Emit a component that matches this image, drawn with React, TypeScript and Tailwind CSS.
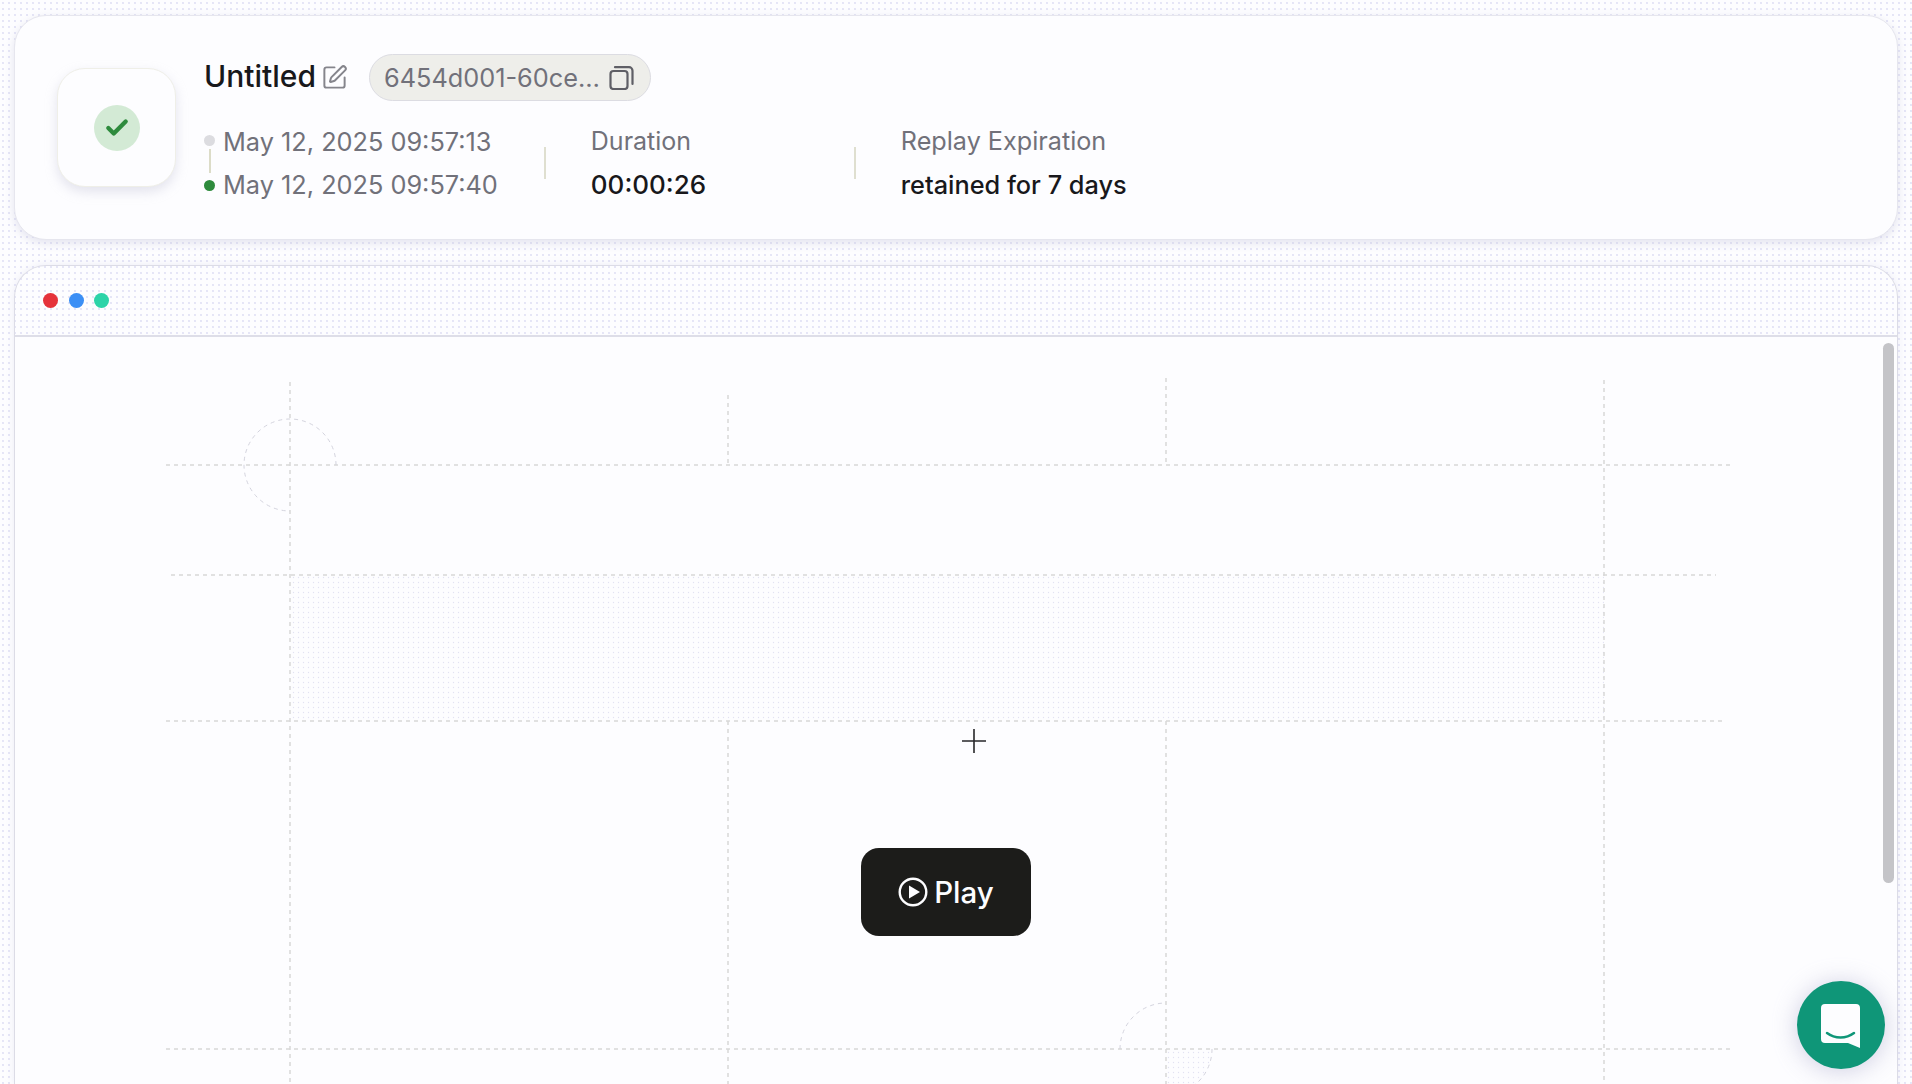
import { Check, SquarePen } from 'lucide-react'

const DOTS =
  'bg-[radial-gradient(#e4e4f6_0.7px,transparent_0.8px)] bg-[size:6px_6px]'

// dashed construction lines behind the play button, in page coordinates minus the panel offset
function GridLines() {
  const dash = { stroke: '#d8d8d8', strokeWidth: 1.5, strokeDasharray: '4 4', fill: 'none' }
  return (
    <svg className="absolute left-0 top-0 h-[760px] w-[1884px]" viewBox="14 337 1884 760">
      <defs>
        <pattern id="dots" width="5" height="5" patternUnits="userSpaceOnUse">
          <circle cx="2.5" cy="2.5" r="0.7" fill="#e2e2f2" />
        </pattern>
      </defs>
      <rect x="289" y="575" width="1314" height="146" fill="url(#dots)" />
      <path d="M165 465H1730M170 575H1715M165 721H1725M165 1049H1730" {...dash} />
      <path d="M289 382V1084M727 395V465M727 721V1084M1165 378V465M1165 721V1084M1603 380V1084" {...dash} />
      <path d="M335 465A46 46 0 1 0 289 511" {...dash} strokeWidth={1} stroke="#d4d4de" />
      <path d="M1119 1049A46 46 0 0 1 1165 1003" {...dash} strokeWidth={1} stroke="#d4d4de" />
      <path d="M1211 1049A46 46 0 0 1 1165 1095V1049Z" fill="url(#dots)" />
      <path d="M1211 1049A46 46 0 0 1 1165 1095" {...dash} strokeWidth={1} stroke="#d4d4de" />
    </svg>
  )
}

function ChatBubble() {
  return (
    <button className="fixed bottom-[15px] right-[27px] flex h-[88px] w-[88px] items-center justify-center rounded-full bg-[#0f9678] shadow-[0_2px_24px_rgba(150,150,190,0.45)]">
      <svg width="40" height="44" viewBox="0 0 40 44" className="mt-[2px]">
        <path d="M4 0H35a4 4 0 0 1 4 4V44L27 39H4a4 4 0 0 1-4-4V4a4 4 0 0 1 4-4Z" fill="#fdfdff" />
        <path d="M6 29C14 35 25 35 33 29" fill="none" stroke="#0f9678" strokeWidth="2.5" strokeLinecap="round" />
      </svg>
    </button>
  )
}

function CopyIcon() {
  return (
    <svg width="25" height="24" viewBox="0 0 25 24" fill="none" stroke="#5f5f66" strokeWidth="2.2">
      <rect x="1.5" y="5" width="17" height="18" rx="3" />
      <path d="M6 1.2H20a3.5 3.5 0 0 1 3.5 3.5V18" strokeLinecap="round" />
    </svg>
  )
}

function PlayIcon() {
  return (
    <svg width="30" height="30" viewBox="0 0 30 30">
      <circle cx="15" cy="15" r="13.3" fill="none" stroke="#fdfdff" strokeWidth="2.4" />
      <path d="M11 8.5L22 15L11 21.5Z" fill="#fdfdff" />
    </svg>
  )
}

function Crosshair() {
  return (
    <svg className="absolute left-[947px] top-[392px]" width="24" height="24" viewBox="0 0 24 24">
      <path d="M0 12H24M12 0V24" stroke="#27272a" strokeWidth="1.6" />
    </svg>
  )
}

export default function App() {
  return (
    <div
      className={`flex h-[1084px] w-[1912px] flex-col gap-[25px] overflow-hidden bg-[#fdfdff] px-[14px] pt-[15px] ${DOTS}`}
      style={{ fontFamily: 'Inter, "Liberation Sans", sans-serif' }}
    >
      {/* summary card */}
      <section className="flex h-[225px] shrink-0 items-start rounded-[32px] border border-[#e6e6ee] bg-[#fdfdff] pl-[42px] pt-[38px] shadow-[0_3px_10px_rgba(190,190,215,0.4)]">
        <div className="mt-[14px] flex h-[119px] w-[119px] items-center justify-center rounded-[28px] border border-[#efefe8] bg-[#fdfdff] shadow-[0_5px_12px_rgba(190,190,210,0.4)]">
          <div className="flex h-[46px] w-[46px] items-center justify-center rounded-full bg-[#d3ead5]">
            <Check className="h-[26px] w-[26px] text-[#2e8b3d]" strokeWidth={4} />
          </div>
        </div>

        <div className="ml-[28px] flex flex-col">
          <div className="flex h-[47px] items-center">
            <span className="mt-[-2px] text-[30px] font-medium text-[#18181b]">Untitled</span>
            <SquarePen className="ml-[5px] h-[27px] w-[27px] text-[#85858c]" strokeWidth={1.75} />
            <div className="ml-[21px] flex h-[47px] w-[282px] items-center justify-between rounded-full border border-[#dcdce2] bg-[#eeeeea] pl-[14px] pr-[16px]">
              <span className="text-[25.3px] text-[#71717a]">
                6454d001-60ce<span className="tracking-[-0.1em]">…</span>
              </span>
              <CopyIcon />
            </div>
          </div>

          <div className="mt-[25px] flex items-center">
            <div className="relative flex flex-col gap-[13px] pl-[19px] text-[25.3px] leading-[30px] text-[#71717a]">
              <span>May 12, 2025 09:57:13</span>
              <span>May 12, 2025 09:57:40</span>
              <span className="absolute left-0 top-[8px] h-[11px] w-[11px] rounded-full bg-[#dcdce0]" />
              <span className="absolute left-[5px] top-[22px] h-[24px] w-[1.5px] bg-[#dcdcc8]" />
              <span className="absolute left-0 top-[53px] h-[11px] w-[11px] rounded-full bg-[#2e8b3d]" />
            </div>
            <div className="ml-[46px] h-[32px] w-[2px] bg-[#dfdfd0]" />
            <div className="ml-[45px] flex w-[263px] flex-col gap-[14px] leading-[30px]">
              <span className="text-[25px] text-[#71717a]">Duration</span>
              <span className="text-[26px] font-medium text-[#18181b]">00:00:26</span>
            </div>
            <div className="h-[32px] w-[2px] bg-[#dfdfd0]" />
            <div className="ml-[45px] flex flex-col gap-[14px] leading-[30px]">
              <span className="text-[25.2px] text-[#71717a]">Replay Expiration</span>
              <span className="text-[25.3px] font-medium text-[#18181b]">retained for 7 days</span>
            </div>
          </div>
        </div>
      </section>

      {/* replay window */}
      <section className="flex min-h-0 flex-1 flex-col rounded-t-[32px] border border-b-0 border-[#dcdce6] shadow-[0_0_8px_rgba(200,200,225,0.3)]">
        <div className="flex h-[71px] shrink-0 items-center gap-[10.5px] border-b-2 border-[#dedee8] pl-[28px]">
          <span className="h-[15px] w-[15px] rounded-full bg-[#e5333b]" />
          <span className="h-[15px] w-[15px] rounded-full bg-[#3b8ff5]" />
          <span className="h-[15px] w-[15px] rounded-full bg-[#2dd4a8]" />
        </div>
        <div className="relative flex min-h-0 flex-1 bg-[#fdfdff]">
          <GridLines />
          <div className="relative flex flex-1 justify-center pt-[511px]">
            <button className="flex h-[88px] w-[170px] items-center justify-center gap-[6px] rounded-[18px] bg-[#1c1c1a] text-[29.5px] font-medium text-[#fdfdff]">
              <PlayIcon />
              Play
            </button>
          </div>
          <div className="relative w-[20px] shrink-0 pt-[6px]">
            <div className="ml-[6px] h-[540px] w-[11px] rounded-full bg-[#c4c4c8]" />
          </div>
          <Crosshair />
        </div>
      </section>

      <ChatBubble />
    </div>
  )
}
